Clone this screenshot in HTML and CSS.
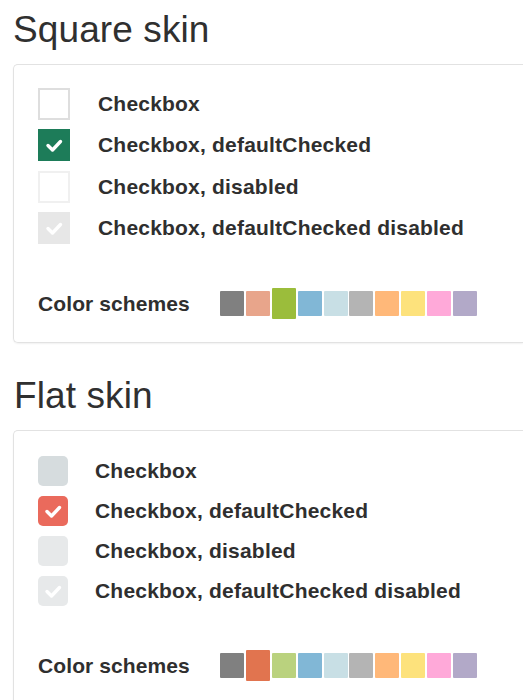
FILE: index.html
```html
<!DOCTYPE html>
<html>
<head>
<meta charset="utf-8">
<link rel="stylesheet" href="styles.css">
</head>
<body>
<section class="section">
  <h2 class="title">Square skin</h2>
  <div class="card card-square">
    <ul class="list list-square">
      <li class="row"><span class="box sq sq-off"></span><span class="label">Checkbox</span></li>
      <li class="row"><span class="box sq sq-on"><svg viewBox="0 0 32 32"><polyline points="10,16.5 14.5,21 22.5,12.5"/></svg></span><span class="label">Checkbox, defaultChecked</span></li>
      <li class="row"><span class="box sq sq-dis"></span><span class="label">Checkbox, disabled</span></li>
      <li class="row"><span class="box sq sq-dis-on"><svg viewBox="0 0 32 32"><polyline points="10,16.5 14.5,21 22.5,12.5"/></svg></span><span class="label">Checkbox, defaultChecked disabled</span></li>
    </ul>
    <div class="schemes">
      <span class="schemes-label">Color schemes</span>
      <div class="swatches">
        <span class="sw c-black"></span>
        <span class="sw c-red"></span>
        <span class="sw c-green active"></span>
        <span class="sw c-blue"></span>
        <span class="sw c-aero"></span>
        <span class="sw c-grey"></span>
        <span class="sw c-orange"></span>
        <span class="sw c-yellow"></span>
        <span class="sw c-pink"></span>
        <span class="sw c-purple"></span>
      </div>
    </div>
  </div>
</section>
<section class="section section-flat">
  <h2 class="title">Flat skin</h2>
  <div class="card card-flat">
    <ul class="list list-flat">
      <li class="row"><span class="box fl fl-off"></span><span class="label">Checkbox</span></li>
      <li class="row"><span class="box fl fl-on"><svg viewBox="0 0 30 30"><polyline points="9,15.5 13.5,20 21.5,11.5"/></svg></span><span class="label">Checkbox, defaultChecked</span></li>
      <li class="row"><span class="box fl fl-dis"></span><span class="label">Checkbox, disabled</span></li>
      <li class="row"><span class="box fl fl-dis-on"><svg viewBox="0 0 30 30"><polyline points="9,15.5 13.5,20 21.5,11.5"/></svg></span><span class="label">Checkbox, defaultChecked disabled</span></li>
    </ul>
    <div class="schemes">
      <span class="schemes-label">Color schemes</span>
      <div class="swatches">
        <span class="sw c-black"></span>
        <span class="sw c-red-active active"></span>
        <span class="sw c-green-flat"></span>
        <span class="sw c-blue"></span>
        <span class="sw c-aero"></span>
        <span class="sw c-grey"></span>
        <span class="sw c-orange"></span>
        <span class="sw c-yellow"></span>
        <span class="sw c-pink"></span>
        <span class="sw c-purple"></span>
      </div>
    </div>
  </div>
</section>
</body>
</html>
```
FILE: styles.css
```css
html, body {
  margin: 0;
  padding: 0;
  background: #fff;
  overflow: hidden;
}
body {
  font-family: "Liberation Sans", Arial, sans-serif;
  color: #2f2f2f;
  width: 523px;
  height: 700px;
}
.section-flat {
  margin-top: 33px;
}
.title {
  margin: 10px 0 14px 13px;
  font-size: 37px;
  line-height: 40px;
  font-weight: normal;
  letter-spacing: 0.1px;
  color: #303030;
}
.section-flat .title {
  margin-top: 0;
  margin-left: 14px;
}
.card {
  margin-left: 13px;
  border: 1px solid #e2e2e2;
  border-right: none;
  border-radius: 5px 0 0 5px;
  box-shadow: 0 1px 2px rgba(0,0,0,0.06);
  padding-left: 24px;
}
.card-square {
  padding-top: 23px;
  padding-bottom: 26px;
}
.card-flat {
  padding-top: 25px;
  padding-bottom: 26px;
}
.list {
  list-style: none;
  margin: 0;
  padding: 0;
  display: flex;
  flex-direction: column;
}
.list-square { gap: 9.25px; }
.list-flat { gap: 10.1px; }
.row {
  display: flex;
  align-items: center;
}
.label {
  font-size: 21px;
  font-weight: bold;
  letter-spacing: 0.2px;
  color: #2f2f2f;
  line-height: 24px;
}
.box {
  flex: none;
  box-sizing: border-box;
  display: flex;
}
.box svg {
  width: 100%;
  height: 100%;
}
.box polyline {
  fill: none;
  stroke: #fff;
  stroke-width: 3.4;
  stroke-linecap: round;
  stroke-linejoin: round;
}
.sq {
  width: 32px;
  height: 32px;
  margin-right: 28px;
}
.sq-off {
  border: 2px solid #dedede;
  background: #fff;
}
.sq-on {
  background: #1d7c59;
}
.sq-dis {
  border: 2px solid #f0f0f0;
  background: #fff;
}
.sq-dis-on {
  background: #e7e7e7;
}
.fl {
  width: 30px;
  height: 30px;
  border-radius: 5px;
  margin-right: 27px;
}
.fl-off { background: #d6dcde; }
.fl-on { background: #ea6a5c; }
.fl-dis { background: #e7e9ea; }
.fl-dis-on { background: #e7e9ea; }
.schemes {
  display: flex;
  align-items: center;
  margin-top: 47px;
}
.schemes-label {
  width: 182px;
  font-size: 21px;
  font-weight: bold;
  letter-spacing: 0.1px;
  line-height: 25px;
  color: #2f2f2f;
}
.swatches {
  display: flex;
  align-items: center;
  gap: 1.9px;
}
.sw {
  width: 24px;
  height: 25px;
  border-radius: 1px;
}
.sw.active {
  height: 31px;
  margin: -3px 0;
}
.c-black { background: #808080; }
.c-red { background: #e8a58b; }
.c-red-active { background: #e1744f; }
.c-green { background: #9bbd3b; }
.c-green-flat { background: #bad27e; }
.c-blue { background: #81b7d6; }
.c-aero { background: #c8dfe5; }
.c-grey { background: #b4b4b4; }
.c-orange { background: #ffb879; }
.c-yellow { background: #fde27c; }
.c-pink { background: #ffa9d9; }
.c-purple { background: #b2a9c8; }
```
